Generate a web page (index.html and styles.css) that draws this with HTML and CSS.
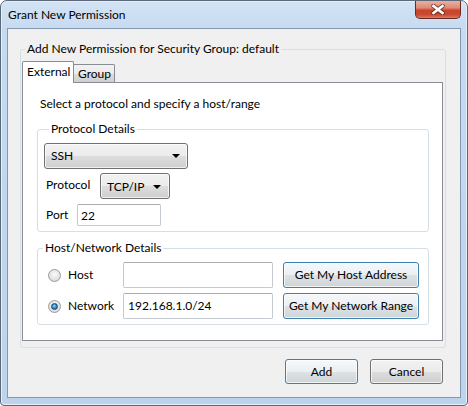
FILE: index.html
```html
<!DOCTYPE html>
<html>
<head>
<meta charset="utf-8">
<title>Grant New Permission</title>
<link rel="stylesheet" href="styles.css">
</head>
<body>
<div class="window">
  <div class="titlebar">
    <span class="title">Grant New Permission</span>
    <div class="close">
      <svg width="14" height="11" viewBox="0 0 14 11">
        <path d="M2.5 2 L11.5 9 M11.5 2 L2.5 9" stroke="#4a1d16" stroke-width="4.6" stroke-linecap="round" opacity="0.65"/>
        <path d="M2.5 2 L11.5 9 M11.5 2 L2.5 9" stroke="#ffffff" stroke-width="2.6" stroke-linecap="square"/>
      </svg>
    </div>
  </div>
  <div class="client">
    <fieldset class="group outer">
      <legend>Add New Permission for Security Group: default</legend>
      <div class="tabs">
        <div class="tab active">External</div>
        <div class="tab">Group</div>
      </div>
      <div class="panel">
        <p class="intro">Select a protocol and specify a host/range</p>
        <fieldset class="group proto">
          <legend>Protocol Details</legend>
          <div class="combo wide"><span>SSH</span><i class="arrow"></i></div>
          <div class="row r1"><span class="lbl lbl-proto">Protocol</span><div class="combo small"><span>TCP/IP</span><i class="arrow"></i></div></div>
          <div class="row r2"><span class="lbl lbl-port">Port</span><div class="input port">22</div></div>
        </fieldset>
        <fieldset class="group net">
          <legend>Host/Network Details</legend>
          <div class="hrow">
            <span class="radio"></span><span class="rlabel">Host</span>
            <div class="input host"></div>
            <div class="btn blue wbtn">Get My Host Address</div>
          </div>
          <div class="hrow second">
            <span class="radio checked"></span><span class="rlabel">Network</span>
            <div class="input host">192.168.1.0/24</div>
            <div class="btn blue wbtn">Get My Network Range</div>
          </div>
        </fieldset>
      </div>
    </fieldset>
    <div class="actions">
      <div class="btn blue act">Add</div>
      <div class="btn act cancel">Cancel</div>
    </div>
  </div>
</div>
</body>
</html>
```
FILE: styles.css
```css
html, body {
  margin: 0;
  padding: 0;
  background: #ffffff;
}
body {
  font-family: "Lato", "Noto Sans", sans-serif;
  font-size: 12px;
  line-height: 16px;
  color: #000;
}
.window {
  box-sizing: border-box;
  width: 468px;
  height: 406px;
  border: 1px solid #5a6878;
  border-radius: 7px 7px 4px 4px;
  background: linear-gradient(to bottom, #d3e3f5 0px, #c6daf0 30px, #bdd3ec 100%);
  box-shadow: inset 0 0 0 1px #e6f0fa;
  padding: 0 6px 7px 6px;
  display: flex;
  flex-direction: column;
}
.titlebar {
  height: 27px;
  display: flex;
  align-items: flex-start;
}
.title {
  margin: 6px 0 0 1px;
  color: #000;
}
.close {
  margin-left: auto;
  width: 46px;
  height: 18px;
  box-sizing: border-box;
  border: 1px solid #6d2a20;
  border-top: none;
  border-radius: 0 0 5px 5px;
  background: linear-gradient(to bottom, #eab0a2 0%, #de8a76 40%, #c8442c 55%, #c94a31 80%, #dc7a62 100%);
  display: flex;
  align-items: center;
  justify-content: center;
}
.close svg { display: block; }
.client {
  flex: 1;
  border: 1px solid #8297b0;
  background: #f0f0f0;
  display: flex;
  flex-direction: column;
  padding: 0 14px 0 12px;
}
.group {
  border: 1px solid #d5dfe5;
  border-radius: 3px;
  margin: 0;
  min-width: 0;
}
.group legend {
  padding: 0 2px;
  line-height: 16px;
}
.outer {
  margin-top: 12px;
  padding: 4px 2px 6px 1px;
}
.outer > legend { margin-left: 3px; }
.tabs {
  display: flex;
  align-items: flex-end;
  height: 22px;
  margin-bottom: -1px;
  position: relative;
  z-index: 1;
}
.tab {
  box-sizing: border-box;
  border: 1px solid #898c95;
  border-bottom: none;
  line-height: 16px;
}
.tab.active {
  width: 52px;
  height: 22px;
  background: #ffffff;
  padding: 2px 0 0 4px;
  border-radius: 2px 2px 0 0;
}
.tab:not(.active) {
  width: 41px;
  height: 18px;
  margin-bottom: 1px;
  border-left: none;
  padding: 1px 0 0 4px;
  background: linear-gradient(to bottom, #f2f2f2 0%, #ebebeb 50%, #dddddd 51%, #cfcfcf 100%);
  border-radius: 0 2px 0 0;
}
.panel {
  border: 1px solid #898c95;
  background: #ffffff;
  padding: 13px 13px 15px 14px;
}
.intro {
  margin: 0 0 9px 3px;
}
.proto {
  padding: 6px 8px 5px 6px;
}
.proto > legend, .net > legend { margin-left: 5px; }
.combo {
  box-sizing: border-box;
  height: 26px;
  border: 1px solid #707070;
  border-radius: 3px;
  background: linear-gradient(to bottom, #f2f2f2 0%, #ebebeb 50%, #dddddd 51%, #cfcfcf 100%);
  box-shadow: inset 0 0 0 1px rgba(255,255,255,0.7);
  display: flex;
  align-items: center;
}
.combo.wide {
  width: 144px;
  padding: 0 0 0 6px;
}
.combo.small {
  width: 70px;
  padding: 2px 0 0 6px;
  height: 26px;
}
.arrow {
  margin-left: auto;
  margin-right: 7px;
  width: 0;
  height: 0;
  border-left: 4px solid transparent;
  border-right: 4px solid transparent;
  border-top: 4px solid #000;
}
.combo.small .arrow { margin-right: 8px; }
.row {
  display: flex;
  align-items: flex-start;
}
.r1 { margin-top: 4px; }
.r2 { margin-top: 5px; }
.lbl {
  margin-left: 2px;
  padding-top: 4px;
}
.lbl-proto { width: 54px; }
.lbl-port { width: 31px; padding-top: 3px; }
.input {
  box-sizing: border-box;
  background: #ffffff;
  border: 1px solid #c5cad2;
  border-top-color: #abadb3;
  border-radius: 2px;
  padding: 2px 0 0 3px;
}
.input.port {
  width: 84px;
  height: 22px;
  padding-top: 3px;
}
.net {
  margin-top: 8px;
  padding: 6px 9px 5px 0;
}
.hrow {
  display: flex;
  align-items: center;
  height: 26px;
}
.hrow.second { margin-top: 5px; }
.radio {
  box-sizing: border-box;
  width: 13px;
  height: 13px;
  margin-left: 10px;
  border-radius: 50%;
  border: 1px solid #9a9a9a;
  background: radial-gradient(circle at 50% 40%, #fbfbfb 0%, #e4e4e4 55%, #d0d0d0 100%);
  display: flex;
  align-items: center;
  justify-content: center;
}
.radio.checked::after {
  content: "";
  width: 7px;
  height: 7px;
  border-radius: 50%;
  box-sizing: border-box;
  border: 1px solid #1b4a6b;
  background: radial-gradient(circle at 45% 40%, #9fdcff 0%, #3c8cc4 45%, #174d78 100%);
}
.rlabel {
  width: 55px;
  margin-left: 7px;
}
.input.host {
  width: 150px;
  height: 26px;
  padding: 4px 0 0 4px;
}
.btn {
  box-sizing: border-box;
  border: 1px solid #707070;
  border-radius: 3px;
  background: linear-gradient(to bottom, #f2f2f2 0%, #ebebeb 50%, #dddddd 51%, #cfcfcf 100%);
  box-shadow: inset 0 0 0 1px rgba(255,255,255,0.75);
  display: flex;
  align-items: center;
  justify-content: center;
}
.btn.blue {
  border-color: #3c7fb1;
  background: linear-gradient(to bottom, #f6f9fb 0%, #eceff1 50%, #dde2e5 51%, #cfd4d7 100%);
}
.wbtn {
  width: 136px;
  height: 26px;
  margin-left: 10px;
}
.actions {
  display: flex;
  justify-content: flex-end;
  margin-top: 11px;
  padding-right: 3px;
}
.act {
  width: 73px;
  height: 25px;
}
.cancel { margin-left: 12px; }
```
